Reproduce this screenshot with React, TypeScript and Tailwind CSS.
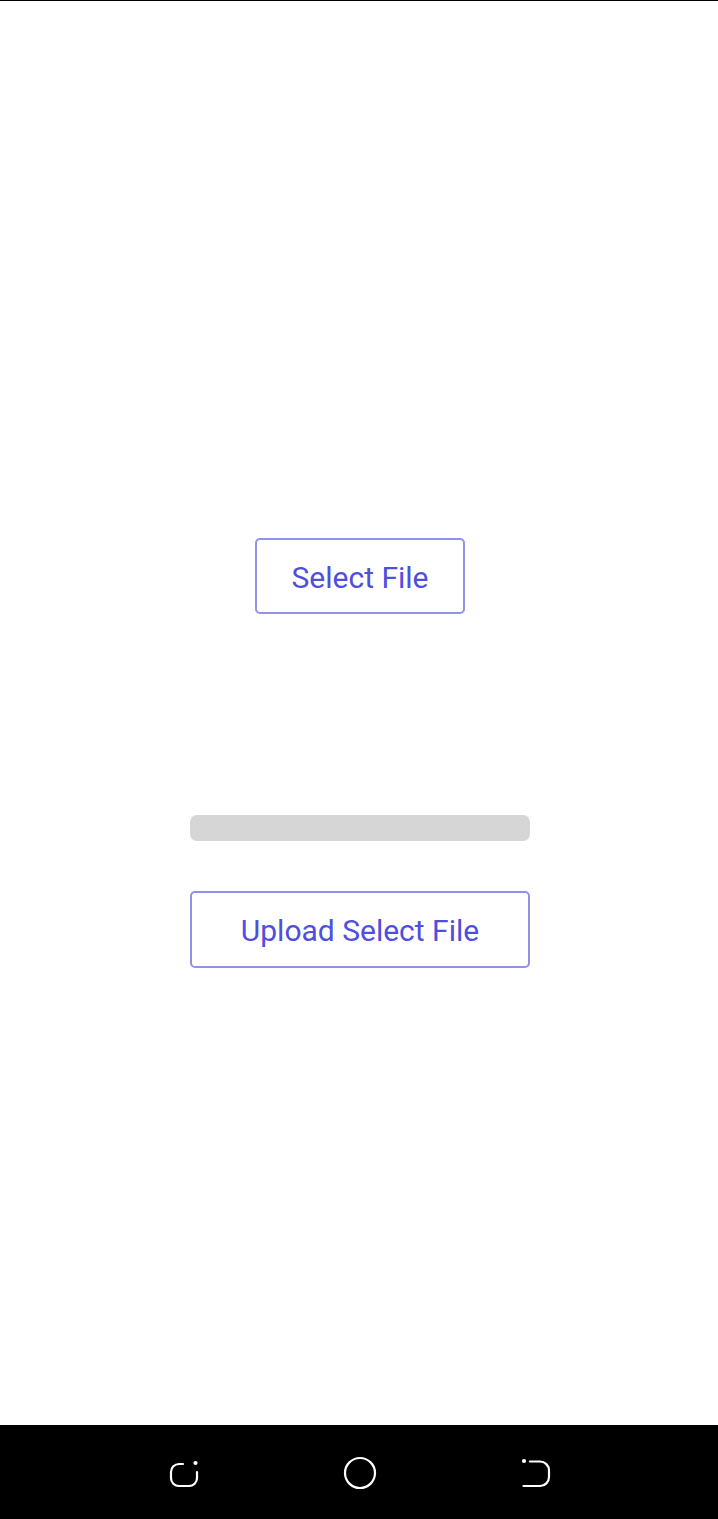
import React from "react";

const NavBar = () => (
  <div className="h-[94px] bg-black flex items-center justify-between pl-[164px] pr-[162px] pt-[2px]">
    <svg width="40" height="40" viewBox="0 0 40 40" fill="none" stroke="white" strokeWidth="2.2" strokeLinecap="round">
      <path d="M19 11 H15 A8 8 0 0 0 7 19 V25 A8 8 0 0 0 15 33 H25 A8 8 0 0 0 33 25 V19" />
      <circle cx="31.5" cy="10" r="1" fill="white" />
    </svg>
    <svg width="40" height="40" viewBox="0 0 40 40" fill="none" stroke="white" strokeWidth="2.2">
      <circle cx="20" cy="20" r="15" />
    </svg>
    <svg width="40" height="40" viewBox="0 0 40 40" fill="none" stroke="white" strokeWidth="2.2" strokeLinecap="round">
      <path d="M14 8.5 H24 A9 9 0 0 1 33 17.5 V24 A9 9 0 0 1 24 33 H7.5" />
      <circle cx="8" cy="8" r="1" fill="white" />
    </svg>
  </div>
);

export default function App() {
  return (
    <div className="w-[718px] h-[1519px] flex flex-col bg-white" style={{ fontFamily: "Roboto, 'Noto Sans', sans-serif" }}>
      <div className="h-px bg-black" />
      <div className="flex-1 flex flex-col items-center pl-[2px]">
        <button className="mt-[537px] w-[210px] h-[76px] border-2 border-[#9191ea] rounded-[5px] text-[30px] leading-none pt-[3px] text-[#4f4fdf]">
          Select File
        </button>
        <div className="mt-[201px] w-[340px] h-[26px] rounded-[7px] bg-[#d6d6d6]" />
        <button className="mt-[50px] w-[340px] h-[77px] border-2 border-[#9191ea] rounded-[5px] text-[30px] leading-none pt-[3px] text-[#4f4fdf]">
          Upload Select File
        </button>
      </div>
      <NavBar />
    </div>
  );
}
